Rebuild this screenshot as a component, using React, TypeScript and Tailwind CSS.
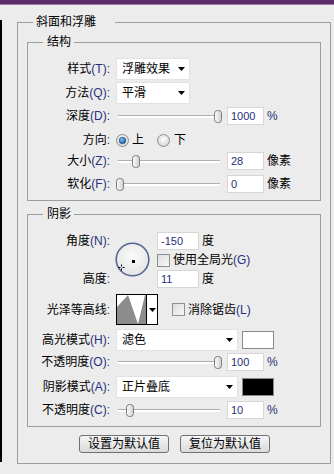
import type { ReactNode } from "react";

const latin = "text-[#27307a]";

function Lbl({ t, k }: { t: string; k?: string }) {
  return (
    <span className="whitespace-nowrap text-[12px] leading-[16px] text-black">
      {t}
      {k && <span className={latin}>({k})</span>}
      <span className={latin}>:</span>
    </span>
  );
}

function Row({ label, className = "", children }: { label: ReactNode; className?: string; children: ReactNode }) {
  return (
    <div className={`flex items-center ${className}`}>
      <div className="w-[82px] shrink-0 flex justify-end">{label}</div>
      <div className="ml-[6px] flex items-center">{children}</div>
    </div>
  );
}

function Caret() {
  return (
    <svg width="7" height="4" viewBox="0 0 7 4">
      <polygon points="0,0 7,0 3.5,4" fill="#000" />
    </svg>
  );
}

function Select({ v, w }: { v: string; w: string }) {
  return (
    <div className={`${w} h-[22px] bg-white border border-[#e2e2e2] flex items-center justify-between pl-[5px] pr-[4px] text-[12px] leading-[16px]`}>
      <span>{v}</span>
      <Caret />
    </div>
  );
}

function Input({ v, w = "w-[37px]" }: { v: string; w?: string }) {
  return (
    <div className={`${w} h-[18px] bg-white border border-[#d6d6d6] pl-[3px] text-[11px] leading-[16px] ${latin}`}>{v}</div>
  );
}

function Slider({ pos }: { pos: number }) {
  return (
    <div className="relative w-[106px] h-[18px]">
      <div className="absolute left-[2px] right-[2px] top-[8px] h-[3px] bg-white border-t border-[#b0b0b0]" />
      <svg
        width="8"
        height="13"
        viewBox="0 0 8 13"
        className="absolute top-[3px]"
        style={{ left: Math.round(pos * 98) }}
      >
        <defs>
          <linearGradient id="thumb" x1="0" y1="0" x2="1" y2="0">
            <stop offset="0" stopColor="#fdfdfd" />
            <stop offset="1" stopColor="#cfcfcf" />
          </linearGradient>
        </defs>
        <rect x="0.5" y="0.5" width="7" height="12" rx="3" fill="url(#thumb)" stroke="#7b7b7b" />
      </svg>
    </div>
  );
}

function Radio({ on }: { on?: boolean }) {
  return (
    <svg width="13" height="13" viewBox="0 0 13 13">
      <defs>
        <radialGradient id="rb" cx="50%" cy="40%" r="60%">
          <stop offset="0" stopColor="#ffffff" />
          <stop offset="1" stopColor="#d4d4d4" />
        </radialGradient>
        <radialGradient id="rd" cx="40%" cy="35%" r="70%">
          <stop offset="0" stopColor="#7fc0ef" />
          <stop offset="1" stopColor="#14579c" />
        </radialGradient>
      </defs>
      <circle cx="6.5" cy="6.5" r="6" fill="url(#rb)" stroke="#8d8d8d" />
      {on && <circle cx="6.5" cy="6.5" r="3.3" fill="url(#rd)" stroke="#1b4a80" strokeWidth="0.6" />}
    </svg>
  );
}

function Check() {
  return (
    <div className="w-[13px] h-[13px] border border-[#8e8f8f] bg-gradient-to-br from-[#dcdcdc] to-[#f8f8f8]" />
  );
}

function Unit({ t }: { t: string }) {
  return <span className={`ml-[3px] text-[12px] leading-[16px] ${t === "%" ? latin : "text-black"}`}>{t}</span>;
}

function Dial() {
  return (
    <svg width="35" height="35" viewBox="0 0 35 35">
      <defs>
        <radialGradient id="dial" cx="50%" cy="40%" r="60%">
          <stop offset="0" stopColor="#fbfbfb" />
          <stop offset="1" stopColor="#e4e4e4" />
        </radialGradient>
      </defs>
      <circle cx="17.5" cy="17.5" r="16.3" fill="url(#dial)" stroke="#566593" strokeWidth="1.6" />
      <rect x="17" y="18" width="3" height="3" fill="#000" />
      <path d="M6.5 22.5v2M6.5 26.5v2M3.5 25.5h2M7.5 25.5h2" stroke="#000" strokeWidth="1" />
    </svg>
  );
}

function Contour() {
  return (
    <div className="w-[42px] h-[31px] border border-black bg-white flex">
      <svg width="29" height="29" viewBox="0 0 29 29">
        <polygon points="0,29 0,12 11,0 21,29 28,0 29,0 29,29" fill="#8c8c8c" />
      </svg>
      <div className="w-px bg-black" />
      <div className="flex-1 flex items-center justify-center">
        <Caret />
      </div>
    </div>
  );
}

function Btn({ t }: { t: string }) {
  return (
    <div className="w-[90px] h-[18px] rounded-[3px] border border-[#707070] bg-gradient-to-b from-[#f6f6f6] to-[#dadada] flex items-center justify-center text-[12px] leading-[16px]">
      {t}
    </div>
  );
}

export default function App() {
  return (
    <div className="w-[334px] h-[474px] bg-[#ececec] overflow-hidden text-black font-['Liberation_Sans','Noto_Sans_CJK_SC',sans-serif]">
      <div className="h-[5px] bg-[#5c2b6c] border-b border-[#9b7ba5]" />
      <div className="flex items-start">
        <div className="w-[2px] h-[442px] mt-[15px] bg-black" />
        <fieldset className="ml-[15px] mt-[9px] w-[314px] border border-[#9d9d9d]">
          <legend className="ml-[15px] pl-[3px] pr-[19px] text-[12px] leading-[16px]">斜面和浮雕</legend>
          <div className="px-[9px] pt-[4px] pb-[10px]">
            {/* 结构 */}
            <fieldset className="border border-[#9d9d9d]">
              <legend className="ml-[15px] pl-[4px] pr-[3px] text-[12px] leading-[16px]">结构</legend>
              <div className="pt-[8px] pb-[7px] flex flex-col">
                <Row label={<Lbl t="样式" k="T" />} className="h-[22px]">
                  <Select v="浮雕效果" w="w-[74px]" />
                </Row>
                <Row label={<Lbl t="方法" k="Q" />} className="h-[22px] mt-[2px]">
                  <Select v="平滑" w="w-[74px]" />
                </Row>
                <Row label={<Lbl t="深度" k="D" />} className="h-[18px] mt-[3px]">
                  <Slider pos={1} />
                  <div className="ml-[5px]"><Input v="1000" /></div>
                  <Unit t="%" />
                </Row>
                <Row label={<Lbl t="方向" />} className="h-[18px] mt-[6px]">
                  <Radio on />
                  <span className="ml-[3px] text-[12px] leading-[16px]">上</span>
                  <div className="ml-[13px] flex"><Radio /></div>
                  <span className="ml-[4px] text-[12px] leading-[16px]">下</span>
                </Row>
                <Row label={<Lbl t="大小" k="Z" />} className="h-[18px] mt-[3px]">
                  <Slider pos={0.163} />
                  <div className="ml-[5px]"><Input v="28" /></div>
                  <Unit t="像素" />
                </Row>
                <Row label={<Lbl t="软化" k="F" />} className="h-[18px] mt-[5px]">
                  <Slider pos={0} />
                  <div className="ml-[5px]"><Input v="0" /></div>
                  <Unit t="像素" />
                </Row>
              </div>
            </fieldset>

            {/* 阴影 */}
            <fieldset className="mt-[5px] border border-[#9d9d9d]">
              <legend className="ml-[15px] pl-[4px] pr-[3px] text-[12px] leading-[16px]">阴影</legend>
              <div className="pb-[7px] flex flex-col">
                <div className="flex mt-[10px]">
                  <div className="w-[82px] shrink-0 flex flex-col items-end">
                    <div className="h-[18px] flex items-center"><Lbl t="角度" k="N" /></div>
                    <div className="h-[20px]" />
                    <div className="h-[18px] flex items-center"><Lbl t="高度" /></div>
                  </div>
                  <div className="ml-[5px] mt-[10px]"><Dial /></div>
                  <div className="ml-[7px] flex flex-col">
                    <div className="h-[18px] flex items-center">
                      <Input v="-150" w="w-[42px]" />
                      <span className="ml-[3px] text-[12px] leading-[16px]">度</span>
                    </div>
                    <div className="h-[20px] flex items-center">
                      <Check />
                      <span className="ml-[3px] text-[12px] leading-[16px]">
                        使用全局光<span className={latin}>(G)</span>
                      </span>
                    </div>
                    <div className="h-[18px] flex items-center">
                      <Input v="11" w="w-[42px]" />
                      <span className="ml-[3px] text-[12px] leading-[16px]">度</span>
                    </div>
                  </div>
                </div>
                <Row label={<Lbl t="光泽等高线" />} className="h-[31px] mt-[6px]">
                  <Contour />
                  <div className="ml-[14px]"><Check /></div>
                  <span className="ml-[3px] text-[12px] leading-[16px]">
                    消除锯齿<span className={latin}>(L)</span>
                  </span>
                </Row>
                <Row label={<Lbl t="高光模式" k="H" />} className="h-[22px] mt-[4px]">
                  <Select v="滤色" w="w-[122px]" />
                  <div className="ml-[4px] w-[32px] h-[18px] bg-white border border-[#8a8a8a]" />
                </Row>
                <Row label={<Lbl t="不透明度" k="O" />} className="h-[18px] mt-[2px]">
                  <Slider pos={1} />
                  <div className="ml-[5px]"><Input v="100" /></div>
                  <Unit t="%" />
                </Row>
                <Row label={<Lbl t="阴影模式" k="A" />} className="h-[22px] mt-[5px]">
                  <Select v="正片叠底" w="w-[122px]" />
                  <div className="ml-[4px] w-[32px] h-[18px] bg-black border border-[#8a8a8a]" />
                </Row>
                <Row label={<Lbl t="不透明度" k="C" />} className="h-[18px] mt-[3px]">
                  <Slider pos={0.102} />
                  <div className="ml-[5px]"><Input v="10" /></div>
                  <Unit t="%" />
                </Row>
              </div>
            </fieldset>

            <div className="mt-[8px] ml-[52px] flex gap-[11px]">
              <Btn t="设置为默认值" />
              <Btn t="复位为默认值" />
            </div>
          </div>
        </fieldset>
      </div>
    </div>
  );
}
